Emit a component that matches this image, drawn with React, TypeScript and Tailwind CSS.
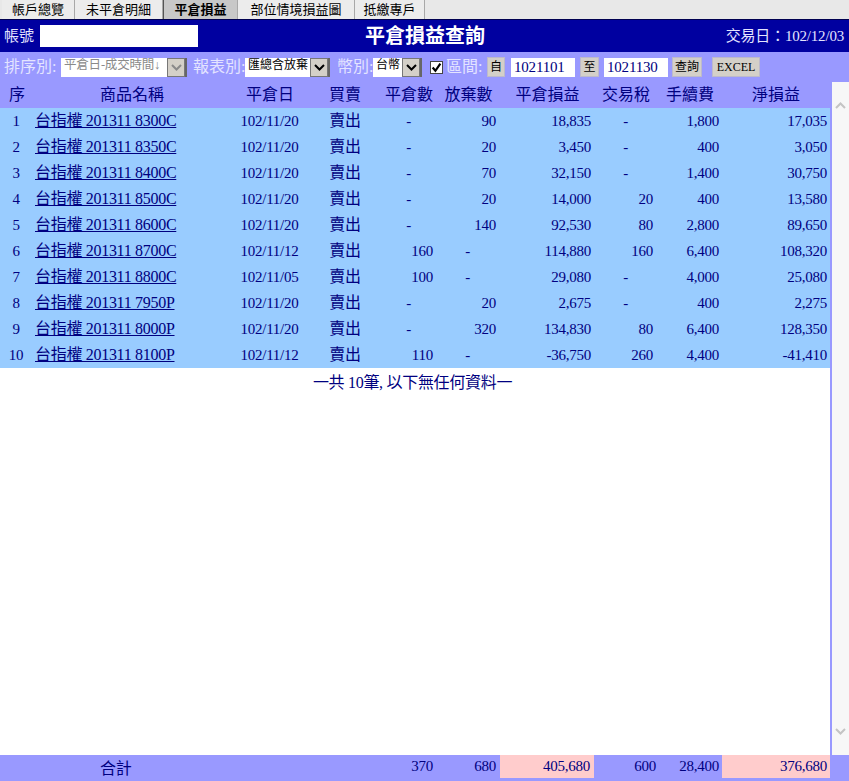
import React from "react";

const rows: string[][] = [
  ["1", "台指權 201311 8300C", "102/11/20", "賣出", "-", "90", "18,835", "-", "1,800", "17,035"],
  ["2", "台指權 201311 8350C", "102/11/20", "賣出", "-", "20", "3,450", "-", "400", "3,050"],
  ["3", "台指權 201311 8400C", "102/11/20", "賣出", "-", "70", "32,150", "-", "1,400", "30,750"],
  ["4", "台指權 201311 8500C", "102/11/20", "賣出", "-", "20", "14,000", "20", "400", "13,580"],
  ["5", "台指權 201311 8600C", "102/11/20", "賣出", "-", "140", "92,530", "80", "2,800", "89,650"],
  ["6", "台指權 201311 8700C", "102/11/12", "賣出", "160", "-", "114,880", "160", "6,400", "108,320"],
  ["7", "台指權 201311 8800C", "102/11/05", "賣出", "100", "-", "29,080", "-", "4,000", "25,080"],
  ["8", "台指權 201311 7950P", "102/11/20", "賣出", "-", "20", "2,675", "-", "400", "2,275"],
  ["9", "台指權 201311 8000P", "102/11/20", "賣出", "-", "320", "134,830", "80", "6,400", "128,350"],
  ["10", "台指權 201311 8100P", "102/11/12", "賣出", "110", "-", "-36,750", "260", "4,400", "-41,410"],
];

const grid = "grid grid-cols-[32px_200px_76px_74px_54px_63px_95px_62px_66px_108px]";

function Tab({ label, active, w }: { label: string; active?: boolean; w: string }) {
  return (
    <div
      className={
        w +
        " h-[19px] flex items-center justify-center text-[13px] leading-none text-black border-r border-[#a8a8a8] " +
        (active ? "bg-[#c8c8c8] font-bold border-l border-l-[#555]" : "bg-[#ececec]")
      }
    >
      {label}
    </div>
  );
}

function Chevron({ color }: { color: string }) {
  return (
    <svg width="11" height="7" viewBox="0 0 11 7" fill="none">
      <path d="M1 1l4.5 4.5L10 1" stroke={color} strokeWidth="2" />
    </svg>
  );
}

function Select({ text, w, muted, small }: { text: string; w: string; muted?: boolean; small?: boolean }) {
  return (
    <div className={w + " h-[19px] bg-white flex items-stretch overflow-hidden shrink-0"}>
      <span
        className={
          "flex-1 min-w-0 overflow-hidden whitespace-nowrap pl-[3px] leading-[15px] " +
          (small ? "text-[12px] " : "text-[12.5px] tracking-[-0.2px] ") +
          (muted ? "text-[#8a8a8a]" : "text-black")
        }
      >
        {text}
      </span>
      <span className="w-[18px] shrink-0 bg-[#d4d0c8] border border-[#777] flex items-center justify-center">
        <Chevron color={muted ? "#8a8a8a" : "#000"} />
      </span>
    </div>
  );
}

function Btn({ label, w }: { label: string; w: string }) {
  return (
    <div className={w + " h-[20px] bg-[#d4d0c8] border border-[#bdbacb] flex items-center justify-center text-[12px] leading-none text-black shrink-0"}>
      {label}
    </div>
  );
}

function Field({ text }: { text: string }) {
  return <div className="w-[64px] h-[19px] bg-white pl-[3px] text-[15px] leading-[19px] tracking-[-0.2px] text-[#000080] shrink-0">{text}</div>;
}

function Label({ text, w }: { text: string; w: string }) {
  return <span className={w + " text-[#e4e4ff] text-[16px] leading-none whitespace-nowrap shrink-0"}>{text}</span>;
}

function Num({ v, dash }: { v: string; dash: string }) {
  return <div className={"text-right " + (v === "-" ? dash : "pr-[3px]")}>{v}</div>;
}

export default function App() {
  return (
    <div className="w-[849px] h-[781px] overflow-hidden flex flex-col bg-white text-[#000080] text-[15px] font-['Liberation_Serif','Noto_Sans_CJK_TC',serif]">
      <div className="h-[19px] flex bg-[#e8e8e8] pl-[2px] shrink-0">
        <Tab label="帳戶總覽" w="w-[73px]" />
        <Tab label="未平倉明細" w="w-[88px]" />
        <Tab label="平倉損益" active w="w-[75px]" />
        <Tab label="部位情境損益圖" w="w-[117px]" />
        <Tab label="抵繳專戶" w="w-[70px]" />
      </div>

      <div className="h-[33px] bg-[#0000a0] border-t border-[#000050] flex items-center shrink-0">
        <span className="ml-[4px] w-[36px] text-[#e4e4ff] text-[15px]">帳號</span>
        <div className="w-[158px] h-[22px] bg-white" />
        <span className="ml-[167px] w-[160px] text-white text-[20px] font-bold leading-none">平倉損益查詢</span>
        <span className="ml-auto mr-[5px] text-[#e4e4ff] text-[15px] tracking-[-0.2px]">交易日：102/12/03</span>
      </div>

      <div className="h-[30px] bg-[#9999ff] flex items-center pl-[4px] shrink-0">
        <Label text="排序別:" w="w-[57px]" />
        <Select text="平倉日-成交時間↓" w="w-[124px]" muted />
        <div className="w-[2px] h-[19px] bg-[#666] mr-[6px]" />
        <Label text="報表別:" w="w-[52px]" />
        <Select text="匯總含放棄" w="w-[83px]" small />
        <div className="w-[2px] h-[19px] bg-[#666] mr-[7px]" />
        <Label text="幣別:" w="w-[36px]" />
        <Select text="台幣" w="w-[47px]" small />
        <div className="w-[2px] h-[19px] bg-[#666] mr-[8px]" />
        <div className="w-[13px] h-[13px] bg-white border border-[#444] flex items-center justify-center shrink-0 mr-[3px]">
          <svg width="11" height="11" viewBox="0 0 10 10" fill="none">
            <path d="M1.5 5l2.5 3 4.5-6.5" stroke="#000" strokeWidth="2" />
          </svg>
        </div>
        <Label text="區間:" w="w-[41px]" />
        <Btn label="自" w="w-[18px]" />
        <div className="w-[6px]" />
        <Field text="1021101" />
        <div className="w-[5px]" />
        <Btn label="至" w="w-[19px]" />
        <div className="w-[5px]" />
        <Field text="1021130" />
        <div className="w-[4px]" />
        <Btn label="查詢" w="w-[30px]" />
        <div className="w-[10px]" />
        <Btn label="EXCEL" w="w-[48px]" />
      </div>

      <div className="flex-1 min-h-0 flex bg-[#9999ff]">
        <div className="w-[830px] bg-white flex flex-col shrink-0">
          <div className={grid + " h-[26px] bg-[#9999ff] items-center text-[16px] text-center leading-none shrink-0"}>
            <div className="pl-[2px]">序</div>
            <div>商品名稱</div>
            <div>平倉日</div>
            <div>買賣</div>
            <div>平倉數</div>
            <div className="pl-[2px]">放棄數</div>
            <div className="pl-[2px]">平倉損益</div>
            <div className="pl-[2px]">交易稅</div>
            <div className="pl-[2px]">手續費</div>
            <div>淨損益</div>
          </div>
          {rows.map((r) => (
            <div key={r[0]} className={grid + " h-[26px] bg-[#99ccff] items-center leading-none tracking-[-0.25px] shrink-0"}>
              <div className="text-center">{r[0]}</div>
              <div className="pl-[3px] underline text-[16px] tracking-[-0.3px] whitespace-nowrap">{r[1]}</div>
              <div className="text-center pr-[1px]">{r[2]}</div>
              <div className="text-center text-[16px]">{r[3]}</div>
              <Num v={r[4]} dash="pr-[25px]" />
              <Num v={r[5]} dash="pr-[29px]" />
              <Num v={r[6]} dash="pr-[3px]" />
              <Num v={r[7]} dash="pr-[28px]" />
              <Num v={r[8]} dash="pr-[3px]" />
              <Num v={r[9]} dash="pr-[3px]" />
            </div>
          ))}
          <div className="text-center h-[30px] leading-[30px] text-[16px] tracking-[-0.3px] pr-[5px]">一共 10筆, 以下無任何資料一</div>
        </div>
        <div className="w-[2px] bg-[#9999ff] shrink-0" />
        <div className="w-[17px] bg-[#f7f7f7] flex flex-col items-center justify-between py-[20px] shrink-0">
          <div className="rotate-180"><Chevron color="#c4c4c4" /></div>
          <Chevron color="#c4c4c4" />
        </div>
      </div>

      <div className={grid + " h-[26px] bg-[#9999ff] items-start leading-[23px] tracking-[-0.25px] shrink-0"}>
        <div />
        <div className="text-[16px] pl-[68px] pt-[2px]">合計</div>
        <div />
        <div />
        <Num v="370" dash="" />
        <Num v="680" dash="" />
        <div className="bg-[#ffcccc] h-[23px] ml-[1px] text-right pr-[4px]">405,680</div>
        <div className="text-right">600</div>
        <Num v="28,400" dash="" />
        <div className="bg-[#ffcccc] h-[23px] text-right pr-[3px]">376,680</div>
      </div>
    </div>
  );
}
